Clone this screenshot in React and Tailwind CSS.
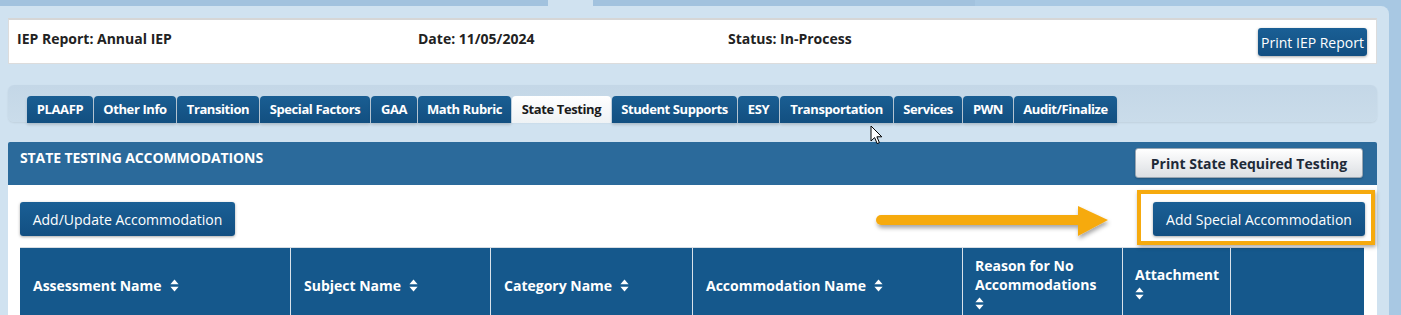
import React from "react";

const tabs = [
  { label: "PLAAFP", w: "w-[66px]" },
  { label: "Other Info", w: "w-[82px]" },
  { label: "Transition", w: "w-[82px]" },
  { label: "Special Factors", w: "w-[110px]" },
  { label: "GAA", w: "w-[46px]" },
  { label: "Math Rubric", w: "w-[93px]" },
  { label: "State Testing", w: "w-[99px]", active: true },
  { label: "Student Supports", w: "w-[125px]" },
  { label: "ESY", w: "w-[41px]" },
  { label: "Transportation", w: "w-[113px]" },
  { label: "Services", w: "w-[68px]" },
  { label: "PWN", w: "w-[50px]" },
  { label: "Audit/Finalize", w: "w-[103px]" },
];

function SortIcon({ className = "" }) {
  return (
    <svg width="9" height="13" viewBox="0 0 9 13" className={className}>
      <path d="M4.5 0.5 L8.6 5.3 L0.4 5.3 Z" fill="white" />
      <path d="M4.5 12.5 L8.6 7.7 L0.4 7.7 Z" fill="white" />
    </svg>
  );
}

function Cursor() {
  return (
    <svg width="13" height="20" viewBox="0 0 13 20" className="absolute left-[870px] top-[125px]">
      <path
        d="M1 1 L1 16 L4.6 12.6 L7.2 18.6 L9.4 17.6 L6.9 11.8 L11.8 11.8 Z"
        fill="white"
        stroke="black"
        strokeWidth="1"
        strokeLinejoin="round"
      />
    </svg>
  );
}

function Arrow() {
  return (
    <svg
      width="240"
      height="44"
      viewBox="0 0 240 44"
      className="absolute left-[872px] top-[200px]"
    >
      <defs>
        <filter id="sh" x="-10%" y="-30%" width="120%" height="180%">
          <feDropShadow dx="1" dy="3" stdDeviation="2" floodColor="#000" floodOpacity="0.35" />
        </filter>
      </defs>
      <g filter="url(#sh)">
        <path d="M9 15 L206 15 L206 25 L9 25 A5 5 0 0 1 9 15 Z" fill="#f6aa0e" />
        <path d="M206 6 L236 20 L206 36 Z" fill="#f6aa0e" />
      </g>
    </svg>
  );
}

const btn =
  "rounded-[3px] bg-gradient-to-b from-[#1a5f95] to-[#124f82] text-white text-[14px] shadow-[0_1px_3px_rgba(0,0,0,0.35)]";

export default function App() {
  return (
    <div
      className="relative w-[1401px] h-[315px] overflow-hidden bg-[#a8c8e3] flex flex-col"
      style={{ fontFamily: '"Open Sans", "Liberation Sans", sans-serif' }}
    >
      {/* top strip */}
      <div className="h-[6px] flex shrink-0">
        <div className="w-[548px] bg-[#a2c2de]" />
        <div className="w-[45px] bg-[#d0e2f0]" />
        <div className="w-[382px] bg-[#a2c2de]" />
      </div>

      <div className="flex flex-1">
        <div className="w-[1389px] bg-[#d0e2f0] rounded-tr-[8px] pt-[12px] pl-[8px] pr-[12px]">
          {/* header card */}
          <div className="h-[46px] bg-white border border-[#dcdcdc] border-t-2 border-t-[#d6d6d6] flex items-start pl-[8px] pr-[9px] text-[14px] font-bold text-[#222]">
            <div className="w-[401px] pt-[8px]">IEP Report: Annual IEP</div>
            <div className="w-[310px] pt-[8px]">Date: 11/05/2024</div>
            <div className="flex-1 pt-[8px]">Status: In-Process</div>
            <button className={`${btn} mt-[8px] h-[28px] w-[109px] font-normal`}>
              Print IEP Report
            </button>
          </div>

          {/* tab bar */}
          <div className="mt-[21px] h-[37px] rounded-[6px] bg-gradient-to-b from-[#c4d7e7] to-[#cadcea] shadow-[0_1px_2px_rgba(0,0,0,0.08)] pl-[19px] pt-[11px]">
            <div className="flex gap-[1px] h-[27px]">
              {tabs.map((t) => (
                <div
                  key={t.label}
                  className={`${t.w} h-[27px] rounded-t-[4px] flex items-center justify-center text-[13px] font-bold tracking-[-0.4px] ${
                    t.active
                      ? "bg-gradient-to-b from-[#ffffff] to-[#eef2f5] text-[#1b1b1b]"
                      : "bg-gradient-to-b from-[#1a5e93] to-[#124f80] text-white shadow-[0_2px_3px_rgba(0,0,0,0.15)]"
                  }`}
                >
                  {t.label}
                </div>
              ))}
            </div>
          </div>

          {/* section header */}
          <div className="mt-[20px] h-[43px] bg-[#2b6a9b] rounded-t-[2px] flex items-start justify-between pl-[12px] pr-[14px]">
            <div className="pt-[5px] text-white font-bold text-[14px] tracking-[-0.1px]">
              STATE TESTING ACCOMMODATIONS
            </div>
            <button className="mt-[6px] h-[30px] w-[228px] rounded-[3px] border border-[#9aa6b2] bg-gradient-to-b from-[#ffffff] to-[#dcdfe3] text-[#1e2a38] text-[14px] font-bold shadow-[0_1px_2px_rgba(0,0,0,0.2)]">
              Print State Required Testing
            </button>
          </div>

          {/* content */}
          <div className="bg-white h-[200px] pl-[12px] pr-[13px] pt-[5px]">
            <div className="flex justify-between items-start h-[56px]">
              <button className={`${btn} mt-[12px] h-[34px] w-[215px]`}>
                Add/Update Accommodation
              </button>
              <div className="-mr-[11px] h-[55px] w-[238px] border-[4px] border-[#f6aa0e] shadow-[1px_2px_4px_rgba(0,0,0,0.35)] pl-[12px] pt-[8px]">
                <button className={`${btn} h-[34px] w-[212px]`}>
                  Add Special Accommodation
                </button>
              </div>
            </div>

            {/* table header */}
            <div className="mt-[1px] border-t border-[#d7dde3] bg-[#15588c] grid grid-cols-[270px_200px_202px_270px_160px_108px_134px] text-white font-bold text-[14px] leading-[19px]">
              {[
                "Assessment Name",
                "Subject Name",
                "Category Name",
                "Accommodation Name",
              ].map((h, i) => (
                <div
                  key={h}
                  className={`h-[75px] flex items-center pl-[13px] ${i > 0 ? "border-l border-[#d9e2ea]" : ""}`}
                >
                  <span>{h}</span>
                  <SortIcon className="ml-[8px]" />
                </div>
              ))}
              <div className="h-[75px] border-l border-[#d9e2ea] pl-[12px] pt-[8px]">
                <div>Reason for No</div>
                <div>Accommodations</div>
                <div className="h-[19px] flex items-center">
                  <SortIcon />
                </div>
              </div>
              <div className="h-[75px] border-l border-[#d9e2ea] pl-[12px] pt-[17px]">
                <div>Attachment</div>
                <div className="h-[19px] flex items-center">
                  <SortIcon />
                </div>
              </div>
              <div className="h-[75px] border-l border-[#d9e2ea]" />
            </div>
          </div>
        </div>
      </div>

      <Arrow />
      <Cursor />
    </div>
  );
}
